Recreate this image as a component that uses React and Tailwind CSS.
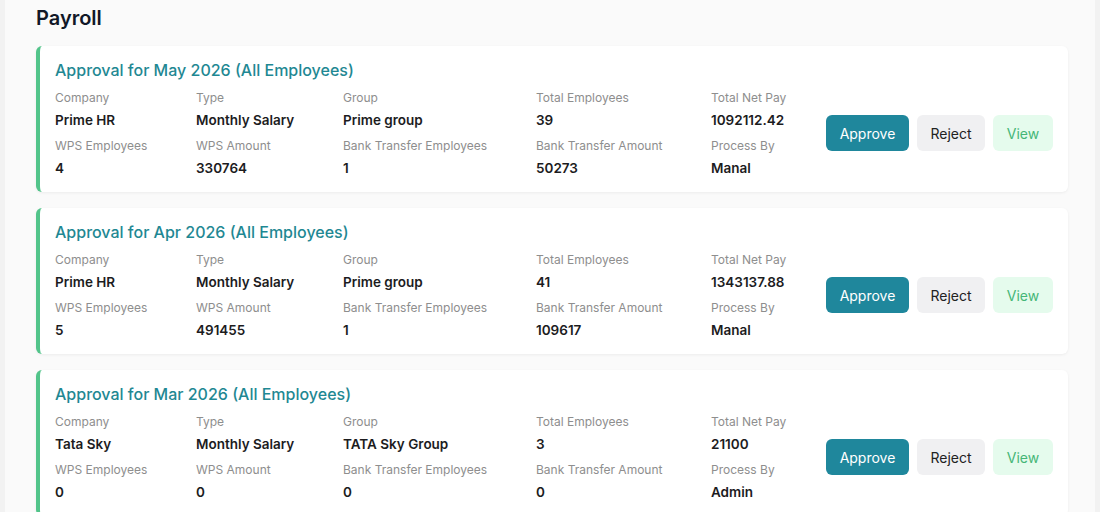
import React from 'react';

const approvals = [
  {
    period: 'May 2026',
    company: 'Prime HR',
    type: 'Monthly Salary',
    group: 'Prime group',
    totalEmployees: '39',
    netPay: '1092112.42',
    wpsEmployees: '4',
    wpsAmount: '330764',
    bankEmployees: '1',
    bankAmount: '50273',
    processBy: 'Manal'
  },
  {
    period: 'Apr 2026',
    company: 'Prime HR',
    type: 'Monthly Salary',
    group: 'Prime group',
    totalEmployees: '41',
    netPay: '1343137.88',
    wpsEmployees: '5',
    wpsAmount: '491455',
    bankEmployees: '1',
    bankAmount: '109617',
    processBy: 'Manal'
  },
  {
    period: 'Mar 2026',
    company: 'Tata Sky',
    type: 'Monthly Salary',
    group: 'TATA Sky Group',
    totalEmployees: '3',
    netPay: '21100',
    wpsEmployees: '0',
    wpsAmount: '0',
    bankEmployees: '0',
    bankAmount: '0',
    processBy: 'Admin'
  }
];

const Field = ({ label, value, className }) => (
  <div className={className}>
    <div className="text-[12px] leading-5 text-[#8e8e8e]">{label}</div>
    <div className="mt-[2px] text-[13.5px] leading-5 font-semibold text-[#1c1c1e]">{value}</div>
  </div>
);

const ApprovalCard = ({ item }) => {
  const cols = ['w-[141px]', 'w-[147px]', 'w-[193px]', 'w-[175px]', 'w-[115px]'];
  const top = [
    ['Company', item.company],
    ['Type', item.type],
    ['Group', item.group],
    ['Total Employees', item.totalEmployees],
    ['Total Net Pay', item.netPay]
  ];
  const bottom = [
    ['WPS Employees', item.wpsEmployees],
    ['WPS Amount', item.wpsAmount],
    ['Bank Transfer Employees', item.bankEmployees],
    ['Bank Transfer Amount', item.bankAmount],
    ['Process By', item.processBy]
  ];

  return (
    <div className="bg-white rounded-md border-l-4 border-[#52c48a] shadow-[0_1px_3px_rgba(0,0,0,0.06)] pl-[15px] pr-[15px] pt-3 pb-[14px]">
      <h2 className="text-[16px] leading-6 font-medium text-[#1f8893]">
        Approval for {item.period} (All Employees)
      </h2>
      <div className="flex items-center mt-[6px]">
        <div className="flex flex-col gap-[6px]">
          <div className="flex">
            {top.map(([l, v], i) => (
              <Field key={l} label={l} value={v} className={cols[i]} />
            ))}
          </div>
          <div className="flex">
            {bottom.map(([l, v], i) => (
              <Field key={l} label={l} value={v} className={cols[i]} />
            ))}
          </div>
        </div>
        <div className="flex items-center gap-2">
          <button className="h-9 w-[83px] rounded-md bg-[#1f879c] text-white text-[14px]">
            Approve
          </button>
          <button className="h-9 w-[68px] rounded-md bg-[#f0f0f2] text-[#222] text-[14px]">
            Reject
          </button>
          <button className="h-9 w-[60px] rounded-md bg-[#e5fbed] text-[#45b677] text-[14px]">
            View
          </button>
        </div>
      </div>
    </div>
  );
}

export default function App() {
  return (
    <div className="min-h-screen bg-[#f2f2f2] px-[5px] font-['Inter',sans-serif]">
      <div className="bg-[#fafafa] min-h-screen pl-[31px] pr-[27px]">
        <h1 className="text-[20px] leading-6 font-semibold text-[#111827] pt-[6px] pb-[16px]">Payroll</h1>
        <div className="flex flex-col gap-4">
          {approvals.map((item) => (
            <ApprovalCard key={item.period} item={item} />
          ))}
        </div>
      </div>
    </div>
  );
}
